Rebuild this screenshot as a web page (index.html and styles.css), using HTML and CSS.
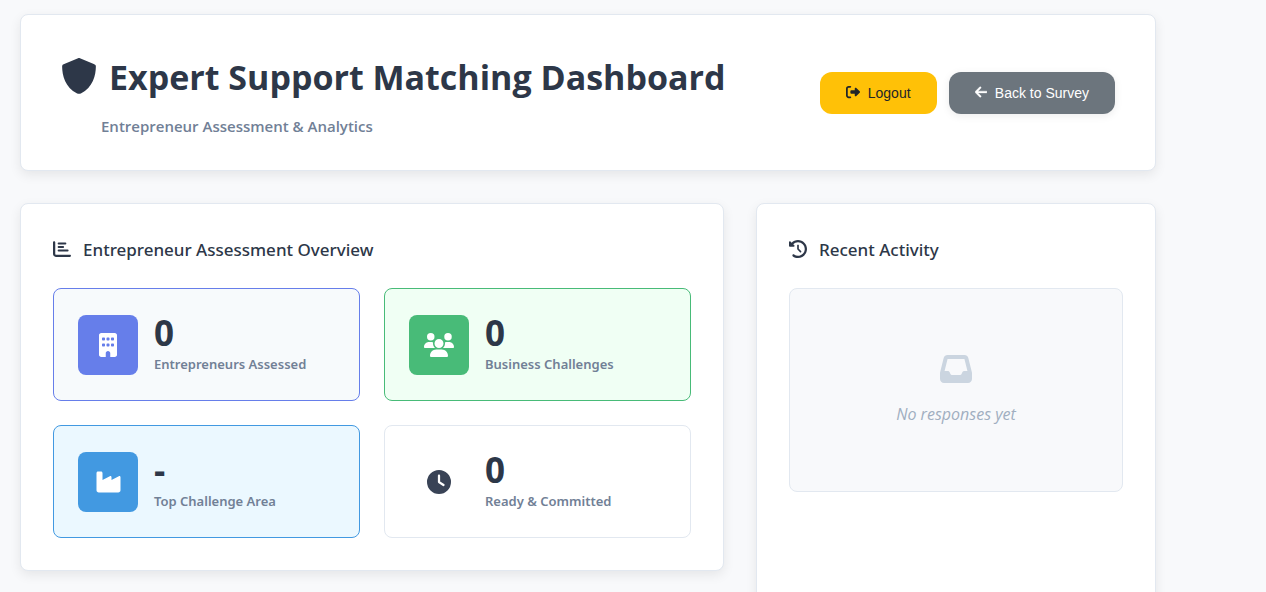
FILE: index.html
```html
<!DOCTYPE html>
<html lang="en">
<head>
<meta charset="utf-8">
<meta name="viewport" content="width=device-width, initial-scale=1">
<title>Expert Support Matching Dashboard</title>
<link rel="stylesheet" href="styles.css">
</head>
<body>
<div class="dashboard">
  <header class="card header">
    <div class="header-text">
      <h1 class="title">
        <svg class="title-icon" viewBox="0 0 512 512" aria-hidden="true"><path d="M269.4 2.9C265.2 1 260.7 0 256 0s-9.2 1-13.4 2.9L54.3 82.8C34 91 17 92 16 120c.5 119.200 41.300 300.700 213.600 383.200c16.700 8 36.100 8 52.800 0C454.700 420.700 495.500 239.200 496 120c0-24-18-29-38.300-37.200L269.400 2.900z"/></svg>
        <span>Expert Support Matching Dashboard</span>
      </h1>
      <p class="subtitle">Entrepreneur Assessment &amp; Analytics</p>
    </div>
    <div class="actions">
      <button type="button" class="btn btn-logout">
        <svg class="btn-icon" viewBox="0 0 512 512" aria-hidden="true"><path d="M377.9 105.9L500.7 228.7c7.2 7.2 11.3 17.1 11.3 27.3s-4.1 20.1-11.3 27.3L377.9 406.1c-6.4 6.4-15 9.9-24 9.9c-18.7 0-33.9-15.2-33.9-33.9l0-62.1-128 0c-17.7 0-32-14.3-32-32l0-64c0-17.7 14.3-32 32-32l128 0 0-62.1c0-18.7 15.2-33.9 33.9-33.9c9 0 17.6 3.6 24 9.9zM160 96L96 96c-17.7 0-32 14.3-32 32l0 256c0 17.7 14.3 32 32 32l64 0c17.7 0 32 14.3 32 32s-14.3 32-32 32l-64 0c-53 0-96-43-96-96L0 128C0 75 43 32 96 32l64 0c17.7 0 32 14.3 32 32s-14.3 32-32 32z"/></svg>
        <span>Logout</span>
      </button>
      <button type="button" class="btn btn-back">
        <svg class="btn-icon" viewBox="0 0 448 512" aria-hidden="true"><path d="M9.4 233.4c-12.5 12.5-12.5 32.8 0 45.3l160 160c12.5 12.5 32.8 12.5 45.3 0s12.5-32.8 0-45.3L109.2 288 416 288c17.7 0 32-14.3 32-32s-14.3-32-32-32l-306.7 0L214.6 118.6c12.5-12.5 12.5-32.8 0-45.3s-32.8-12.5-45.3 0l-160 160z" stroke="currentColor" stroke-width="14"/></svg>
        <span>Back to Survey</span>
      </button>
    </div>
  </header>

  <main class="columns">
    <section class="card panel">
      <h2 class="panel-title">
        <svg class="panel-icon" viewBox="0 0 512 512" aria-hidden="true"><path d="M32 32c17.7 0 32 14.3 32 32V400c0 8.8 7.2 16 16 16H480c17.7 0 32 14.3 32 32s-14.3 32-32 32H80c-44.2 0-80-35.8-80-80V64C0 46.3 14.3 32 32 32zM160 72H352a28 28 0 0 1 0 56H160a28 28 0 0 1 0-56zM160 172H288a28 28 0 0 1 0 56H160a28 28 0 0 1 0-56zM160 272H416a28 28 0 0 1 0 56H160a28 28 0 0 1 0-56z"/></svg>
        <span>Entrepreneur Assessment Overview</span>
      </h2>
      <div class="stats">
        <article class="stat stat-primary">
          <div class="stat-icon">
            <svg viewBox="0 0 384 512" aria-hidden="true"><path d="M48 0C21.5 0 0 21.5 0 48V464c0 26.5 21.5 48 48 48h96V432c0-26.5 21.5-48 48-48s48 21.5 48 48v80h96c26.5 0 48-21.5 48-48V48c0-26.5-21.5-48-48-48H48zM64 240c0-8.8 7.2-16 16-16h32c8.8 0 16 7.2 16 16v32c0 8.8-7.2 16-16 16H80c-8.8 0-16-7.2-16-16V240zm112-16h32c8.8 0 16 7.2 16 16v32c0 8.8-7.2 16-16 16H176c-8.8 0-16-7.2-16-16V240c0-8.8 7.2-16 16-16zm80 16c0-8.8 7.2-16 16-16h32c8.8 0 16 7.2 16 16v32c0 8.8-7.2 16-16 16H272c-8.8 0-16-7.2-16-16V240zM80 96h32c8.8 0 16 7.2 16 16v32c0 8.8-7.2 16-16 16H80c-8.8 0-16-7.2-16-16V112c0-8.8 7.2-16 16-16zm80 16c0-8.8 7.2-16 16-16h32c8.8 0 16 7.2 16 16v32c0 8.8-7.2 16-16 16H176c-8.8 0-16-7.2-16-16V112zM272 96h32c8.8 0 16 7.2 16 16v32c0 8.8-7.2 16-16 16H272c-8.8 0-16-7.2-16-16V112c0-8.8 7.2-16 16-16z"/></svg>
          </div>
          <div class="stat-body">
            <div class="stat-value">0</div>
            <div class="stat-label">Entrepreneurs Assessed</div>
          </div>
        </article>
        <article class="stat stat-success">
          <div class="stat-icon">
            <svg viewBox="0 0 640 512" aria-hidden="true"><path d="M144 0a80 80 0 1 1 0 160A80 80 0 1 1 144 0zM512 0a80 80 0 1 1 0 160A80 80 0 1 1 512 0zM0 298.7C0 239.8 47.8 192 106.7 192h42.7c15.9 0 31 3.5 44.6 9.7c-1.3 7.2-1.9 14.7-1.9 22.3c0 38.2 16.8 72.5 43.3 96c-.2 0-.4 0-.7 0H21.3C9.6 320 0 310.4 0 298.7zM405.3 320c-.2 0-.4 0-.7 0c26.6-23.5 43.3-57.8 43.3-96c0-7.6-.7-15-1.9-22.3c13.6-6.3 28.7-9.7 44.6-9.7h42.7C592.2 192 640 239.8 640 298.7c0 11.8-9.6 21.3-21.3 21.3H405.3zM224 224a96 96 0 1 1 192 0 96 96 0 1 1 -192 0zM128 485.3C128 411.7 187.7 352 261.3 352H378.7C452.3 352 512 411.7 512 485.3c0 14.7-11.9 26.7-26.7 26.7H154.7c-14.7 0-26.7-11.9-26.7-26.7z"/></svg>
          </div>
          <div class="stat-body">
            <div class="stat-value">0</div>
            <div class="stat-label">Business Challenges</div>
          </div>
        </article>
        <article class="stat stat-info">
          <div class="stat-icon">
            <svg viewBox="0 0 576 512" aria-hidden="true"><path d="M64 32C46.3 32 32 46.3 32 64V304v48 80c0 26.5 21.5 48 48 48H496c26.5 0 48-21.5 48-48V304 152.2c0-18.2-19.4-29.7-35.4-21.1L352 215.4V152.2c0-18.2-19.4-29.7-35.4-21.1L160 215.4V64c0-17.7-14.3-32-32-32H64z"/></svg>
          </div>
          <div class="stat-body">
            <div class="stat-value">-</div>
            <div class="stat-label">Top Challenge Area</div>
          </div>
        </article>
        <article class="stat stat-plain">
          <div class="stat-icon">
            <svg viewBox="0 0 512 512" aria-hidden="true"><path d="M256 0a256 256 0 1 1 0 512A256 256 0 1 1 256 0zM232 120V256c0 8 4 15.5 10.7 20l96 64c11 7.4 25.9 4.4 33.3-6.7s4.4-25.9-6.7-33.3L280 243.2V120c0-13.3-10.7-24-24-24s-24 10.7-24 24z"/></svg>
          </div>
          <div class="stat-body">
            <div class="stat-value">0</div>
            <div class="stat-label">Ready &amp; Committed</div>
          </div>
        </article>
      </div>
    </section>

    <aside class="card panel activity">
      <h2 class="panel-title">
        <svg class="panel-icon" viewBox="0 0 512 512" aria-hidden="true"><path d="M75 75L41 41C25.9 25.9 0 36.6 0 57.9V168c0 13.3 10.7 24 24 24H134.1c21.4 0 32.1-25.9 17-41l-30.8-30.8C155 85.5 203 64 256 64c106 0 192 86 192 192s-86 192-192 192c-40.8 0-78.6-12.7-109.7-34.4c-14.5-10.1-34.4-6.6-44.6 7.9s-6.6 34.4 7.9 44.6C151.2 495 201.7 512 256 512c141.4 0 256-114.6 256-256S397.4 0 256 0C185.3 0 121.3 28.7 75 75zm181 53c-13.3 0-24 10.7-24 24V256c0 6.4 2.5 12.5 7 17l72 72c9.4 9.4 24.6 9.4 33.9 0s9.4-24.6 0-33.9l-65-65V152c0-13.3-10.7-24-24-24z"/></svg>
        <span>Recent Activity</span>
      </h2>
      <div class="empty">
        <svg class="empty-icon" viewBox="0 0 512 512" aria-hidden="true"><path d="M121 32C91.6 32 66 52 58.9 80.5L1.9 308.4C.6 313.5 0 318.7 0 323.9V416c0 35.3 28.7 64 64 64H448c35.3 0 64-28.7 64-64V323.9c0-5.2-.6-10.4-1.9-15.5l-57-227.9C446 52 420.4 32 391 32H121zm0 64H391l48 192H387.8c-12.1 0-23.2 6.8-28.6 17.7l-14.3 28.6c-5.4 10.8-16.5 17.7-28.6 17.7H195.8c-12.1 0-23.2-6.8-28.6-17.7l-14.3-28.6c-5.4-10.8-16.5-17.7-28.6-17.7H73L121 96z"/></svg>
        <p class="empty-text">No responses yet</p>
      </div>
    </aside>
  </main>
</div>
</body>
</html>
```
FILE: styles.css
```css
* {
  box-sizing: border-box;
}

body {
  margin: 0;
  height: 100vh;
  overflow: hidden;
  background: #f8f9fb;
  color: #2d3748;
  font-family: "Segoe UI", "Open Sans", "Noto Sans", sans-serif;
}

h1,
h2,
p {
  margin: 0;
}

svg {
  display: block;
  flex: none;
  fill: currentColor;
}

.dashboard {
  display: flex;
  flex-direction: column;
  gap: 32px;
  padding: 14px 110px 0 20px;
}

.card {
  background: #fff;
  border: 1px solid #e2e8f0;
  border-radius: 8px;
  box-shadow: 0 4px 12px rgba(0, 0, 0, 0.08);
}

.header {
  display: flex;
  align-items: center;
  justify-content: space-between;
  padding: 32px 40px;
}

.title {
  display: flex;
  align-items: center;
  gap: 12px;
  font-size: 34px;
  font-weight: 700;
  line-height: 60px;
}

.title-icon {
  width: 36px;
  height: 36px;
  margin-bottom: 2px;
}

.subtitle {
  padding: 8px 0 0 40px;
  color: #718096;
  font-size: 15px;
  font-weight: 600;
  line-height: 23px;
}

.actions {
  display: flex;
  gap: 12px;
}

.btn {
  display: flex;
  align-items: center;
  gap: 8px;
  height: 42px;
  padding: 0 26px;
  border: 0;
  border-radius: 12px;
  font-family: "Liberation Sans", Arial, sans-serif;
  font-size: 14px;
  cursor: pointer;
}

.btn-icon {
  height: 14px;
  margin-bottom: 2px;
}

.btn-logout {
  background: #ffc107;
  color: #212529;
}

.btn-back {
  background: #6c757d;
  color: #fff;
  box-shadow: 0 2px 8px rgba(0, 0, 0, 0.08);
}

.columns {
  display: grid;
  grid-template-columns: 1fr 400px;
  align-items: start;
  gap: 32px;
}

.panel {
  padding: 32px;
}

.activity {
  min-height: 480px;
}

.panel-title {
  display: flex;
  align-items: center;
  gap: 12px;
  margin-bottom: 24px;
  font-family: "Segoe UI", "Noto Sans", "Open Sans", sans-serif;
  font-size: 17px;
  font-weight: 500;
  line-height: 28px;
}

.panel-icon {
  width: 18px;
  height: 18px;
  margin-bottom: 2px;
}

.stats {
  display: grid;
  grid-template-columns: 1fr 1fr;
  gap: 24px;
}

.stat {
  display: flex;
  align-items: center;
  gap: 16px;
  padding: 24px;
  border: 1px solid #e2e8f0;
  border-radius: 8px;
}

.stat-icon {
  display: flex;
  align-items: center;
  justify-content: center;
  width: 60px;
  height: 60px;
  border-radius: 8px;
}

.stat-icon svg {
  height: 24px;
}

.stat-value {
  font-size: 35px;
  font-weight: 700;
  line-height: 40px;
}

.stat-label {
  color: #718096;
  font-family: "Segoe UI", "Noto Sans", "Open Sans", sans-serif;
  font-size: 13px;
  font-weight: 600;
  line-height: 23px;
}

.stat-primary {
  background: #f7fafc;
  border-color: #667eea;
}

.stat-primary .stat-icon {
  background: #667eea;
  color: #fff;
}

.stat-success {
  background: #f0fff4;
  border-color: #48bb78;
}

.stat-success .stat-icon {
  background: #48bb78;
  color: #fff;
}

.stat-info {
  background: #ebf8ff;
  border-color: #4299e1;
}

.stat-info .stat-icon {
  background: #4299e1;
  color: #fff;
}

.stat-plain .stat-icon {
  color: #394356;
}

.empty {
  display: flex;
  flex-direction: column;
  align-items: center;
  gap: 16px;
  padding: 64px 32px;
  border: 1px solid #e2e8f0;
  border-radius: 8px;
  background: #f8f9fb;
}

.empty-icon {
  width: 32px;
  height: 32px;
  color: #cbd5e0;
}

.empty-text {
  color: #a0aec0;
  font-size: 16px;
  font-style: italic;
  line-height: 26px;
}
```
